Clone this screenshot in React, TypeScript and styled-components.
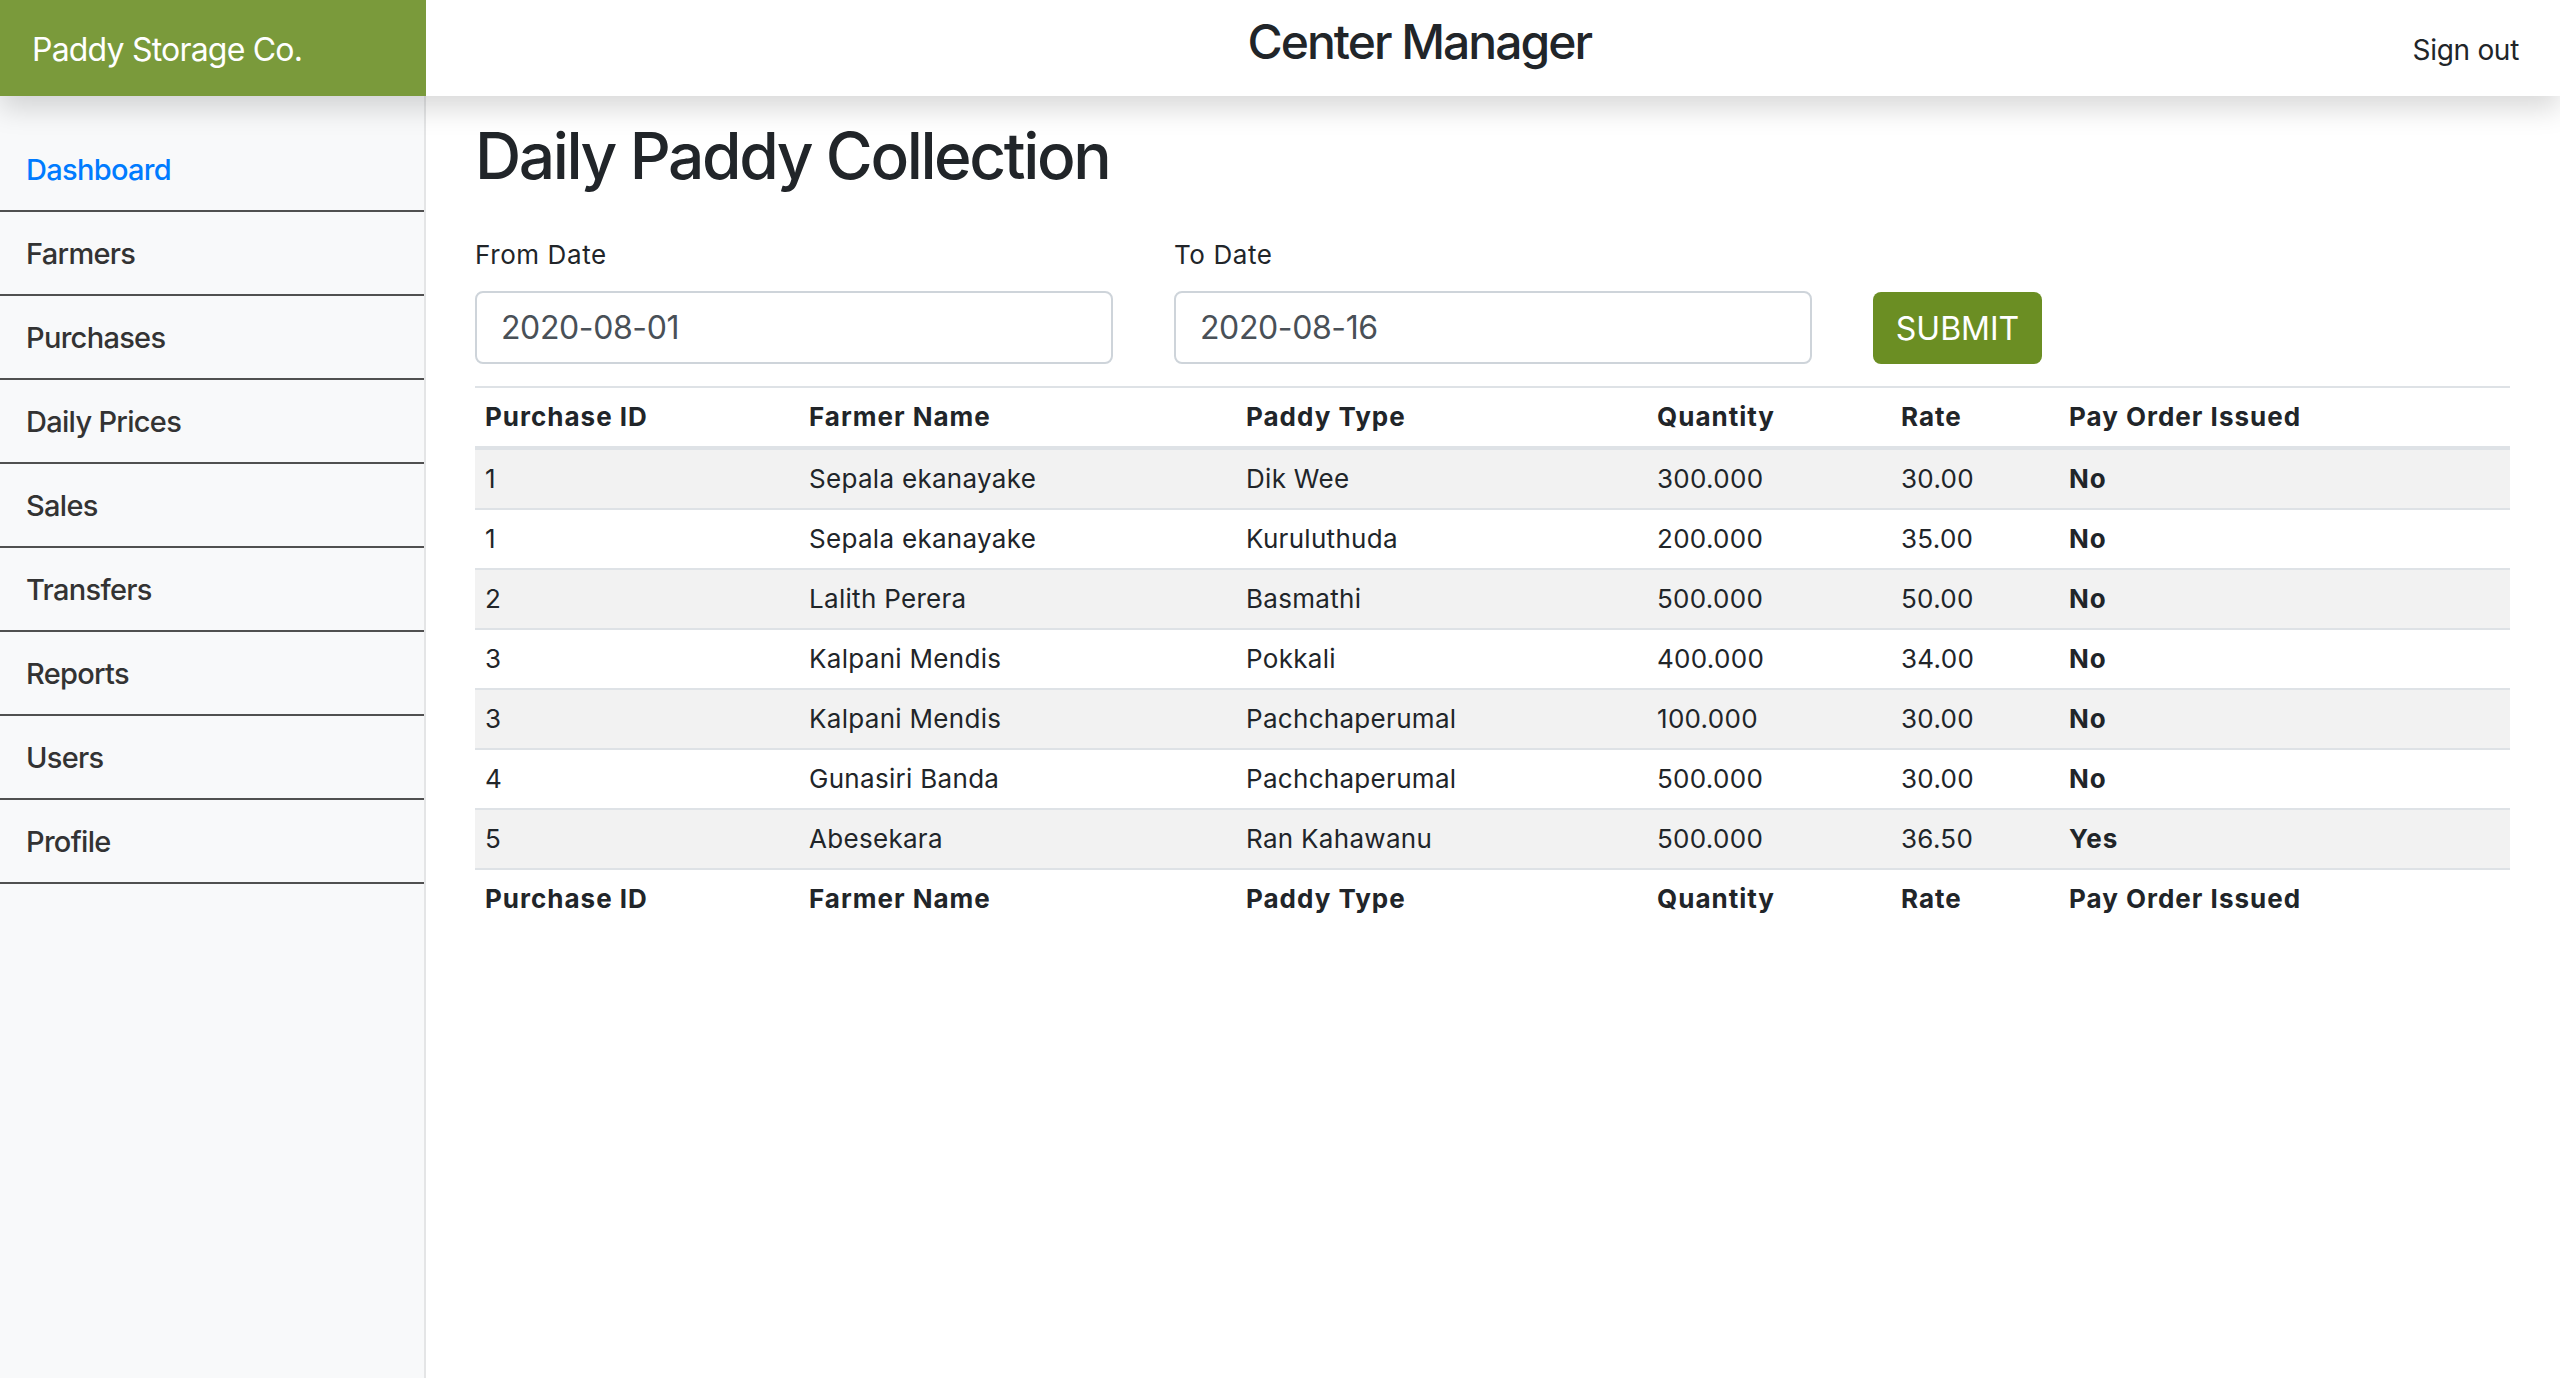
import React from "react";
import styled, { createGlobalStyle } from "styled-components";

const GlobalStyle = createGlobalStyle`
  html, body {
    margin: 0;
    padding: 0;
    background: #fff;
    font-family: Inter, "Noto Sans", "Liberation Sans", sans-serif;
    color: #212529;
  }
  * {
    box-sizing: border-box;
  }
`;

const navItems = [
  "Dashboard",
  "Farmers",
  "Purchases",
  "Daily Prices",
  "Sales",
  "Transfers",
  "Reports",
  "Users",
  "Profile",
];

const columns = [
  { label: "Purchase ID", width: 324 },
  { label: "Farmer Name", width: 437 },
  { label: "Paddy Type", width: 411 },
  { label: "Quantity", width: 244 },
  { label: "Rate", width: 168 },
  { label: "Pay Order Issued", width: 451 },
];

const purchases = [
  { id: "1", farmer: "Sepala ekanayake", type: "Dik Wee", qty: "300.000", rate: "30.00", issued: "No" },
  { id: "1", farmer: "Sepala ekanayake", type: "Kuruluthuda", qty: "200.000", rate: "35.00", issued: "No" },
  { id: "2", farmer: "Lalith Perera", type: "Basmathi", qty: "500.000", rate: "50.00", issued: "No" },
  { id: "3", farmer: "Kalpani Mendis", type: "Pokkali", qty: "400.000", rate: "34.00", issued: "No" },
  { id: "3", farmer: "Kalpani Mendis", type: "Pachchaperumal", qty: "100.000", rate: "30.00", issued: "No" },
  { id: "4", farmer: "Gunasiri Banda", type: "Pachchaperumal", qty: "500.000", rate: "30.00", issued: "No" },
  { id: "5", farmer: "Abesekara", type: "Ran Kahawanu", qty: "500.000", rate: "36.50", issued: "Yes" },
];

function App(): JSX.Element {
  return (
    <Page>
      <GlobalStyle />
      <Header>
        <Brand>Paddy Storage Co.</Brand>
        <HeaderTitle>Center Manager</HeaderTitle>
        <SignOut href="#">Sign out</SignOut>
      </Header>
      <Body>
        <Sidebar>
          {navItems.map((item, i) => (
            <NavItem key={item} $active={i === 0}>
              {item}
            </NavItem>
          ))}
        </Sidebar>
        <Main>
          <Title>Daily Paddy Collection</Title>
          <FilterRow>
            <FieldGroup>
              <Label>From Date</Label>
              <DateInput defaultValue="2020-08-01" />
            </FieldGroup>
            <FieldGroup>
              <Label>To Date</Label>
              <DateInput defaultValue="2020-08-16" />
            </FieldGroup>
            <SubmitButton>SUBMIT</SubmitButton>
          </FilterRow>
          <Table>
            <colgroup>
              {columns.map((c) => (
                <col key={c.label} style={{ width: c.width }} />
              ))}
            </colgroup>
            <thead>
              <tr>
                {columns.map((c) => (
                  <HeadCell key={c.label}>{c.label}</HeadCell>
                ))}
              </tr>
            </thead>
            <tbody>
              {purchases.map((p, i) => (
                <Row key={i} $striped={i % 2 === 0}>
                  <Cell>{p.id}</Cell>
                  <Cell>{p.farmer}</Cell>
                  <Cell>{p.type}</Cell>
                  <Cell>{p.qty}</Cell>
                  <Cell>{p.rate}</Cell>
                  <Cell $bold>{p.issued}</Cell>
                </Row>
              ))}
            </tbody>
            <tfoot>
              <tr>
                {columns.map((c) => (
                  <FootCell key={c.label}>{c.label}</FootCell>
                ))}
              </tr>
            </tfoot>
          </Table>
        </Main>
      </Body>
    </Page>
  );
}

const Page = styled.div`
  display: flex;
  flex-direction: column;
  min-height: 100vh;
`;

const Header = styled.header`
  display: flex;
  justify-content: space-between;
  align-items: center;
  height: 96px;
  background: #fff;
  box-shadow: 0 13px 26px rgba(0, 0, 0, 0.15);
  position: relative;
  z-index: 2;
`;

const Brand = styled.div`
  width: 426px;
  height: 100%;
  background: #7a9a3b;
  color: #fff;
  font-size: 32px;
  line-height: 48px;
  letter-spacing: -0.8px;
  padding: 26px 0 0 32px;
`;

const HeaderTitle = styled.h1`
  margin: 0 0 12px;
  font-size: 48px;
  line-height: 58px;
  font-weight: 500;
  letter-spacing: -2px;
  color: #212529;
`;

const SignOut = styled.a`
  font-size: 28px;
  line-height: 42px;
  letter-spacing: -0.3px;
  color: #212529;
  text-decoration: none;
  padding-right: 41px;
  margin-top: 4px;
`;

const Body = styled.div`
  display: flex;
  flex: 1;
`;

const Sidebar = styled.nav`
  width: 426px;
  flex-shrink: 0;
  background: #f8f9fa;
  border-right: 2px solid #e4e5e6;
  padding-top: 32px;
`;

const NavItem = styled.div<{ $active?: boolean }>`
  height: 84px;
  display: flex;
  align-items: center;
  padding-left: 26px;
  border-bottom: 2px solid #505050;
  font-size: 29px;
  font-weight: 500;
  letter-spacing: -0.7px;
  color: ${(p) => (p.$active ? "#007bff" : "#333")};
`;

const Main = styled.main`
  flex: 1;
  padding: 21px 50px 40px 49px;
`;

const Title = styled.h2`
  margin: 0;
  font-size: 64px;
  line-height: 77px;
  font-weight: 500;
  letter-spacing: -2.4px;
  color: #212529;
`;

const FilterRow = styled.div`
  display: flex;
  align-items: flex-end;
  gap: 61px;
  margin-top: 41px;
`;

const FieldGroup = styled.div`
  display: flex;
  flex-direction: column;
  width: 638px;
`;

const Label = styled.label`
  font-size: 26px;
  line-height: 39px;
  letter-spacing: 0.6px;
  margin-bottom: 17px;
`;

const DateInput = styled.input`
  height: 73px;
  border: 2px solid #ced4da;
  border-radius: 8px;
  padding: 0 24px;
  font-family: inherit;
  font-size: 32px;
  letter-spacing: -0.4px;
  color: #495057;
  background: #fff;
  outline: none;
`;

const SubmitButton = styled.button`
  height: 72px;
  width: 169px;
  border: none;
  border-radius: 8px;
  background: #6b8e23;
  color: #fff;
  font-family: inherit;
  font-size: 32px;
  cursor: pointer;
`;

const Table = styled.table`
  width: 2035px;
  margin-top: 22px;
  border-collapse: separate;
  border-spacing: 0;
  table-layout: fixed;
  font-size: 26px;
  line-height: 40px;
`;

const HeadCell = styled.th`
  text-align: left;
  font-weight: 700;
  letter-spacing: 1px;
  padding: 9px 10px;
  border-top: 2px solid #dee2e6;
  border-bottom: 4px solid #dee2e6;
`;

const Row = styled.tr<{ $striped?: boolean }>`
  background: ${(p) => (p.$striped ? "#f2f2f2" : "#fff")};
`;

const Cell = styled.td<{ $bold?: boolean }>`
  padding: 9px 10px;
  border-bottom: 2px solid #dee2e6;
  font-weight: ${(p) => (p.$bold ? 700 : 400)};
  letter-spacing: ${(p) => (p.$bold ? "1px" : "0.3px")};
  white-space: nowrap;
`;

const FootCell = styled.th`
  text-align: left;
  font-weight: 700;
  letter-spacing: 1px;
  padding: 9px 10px;
`;

export default App;
